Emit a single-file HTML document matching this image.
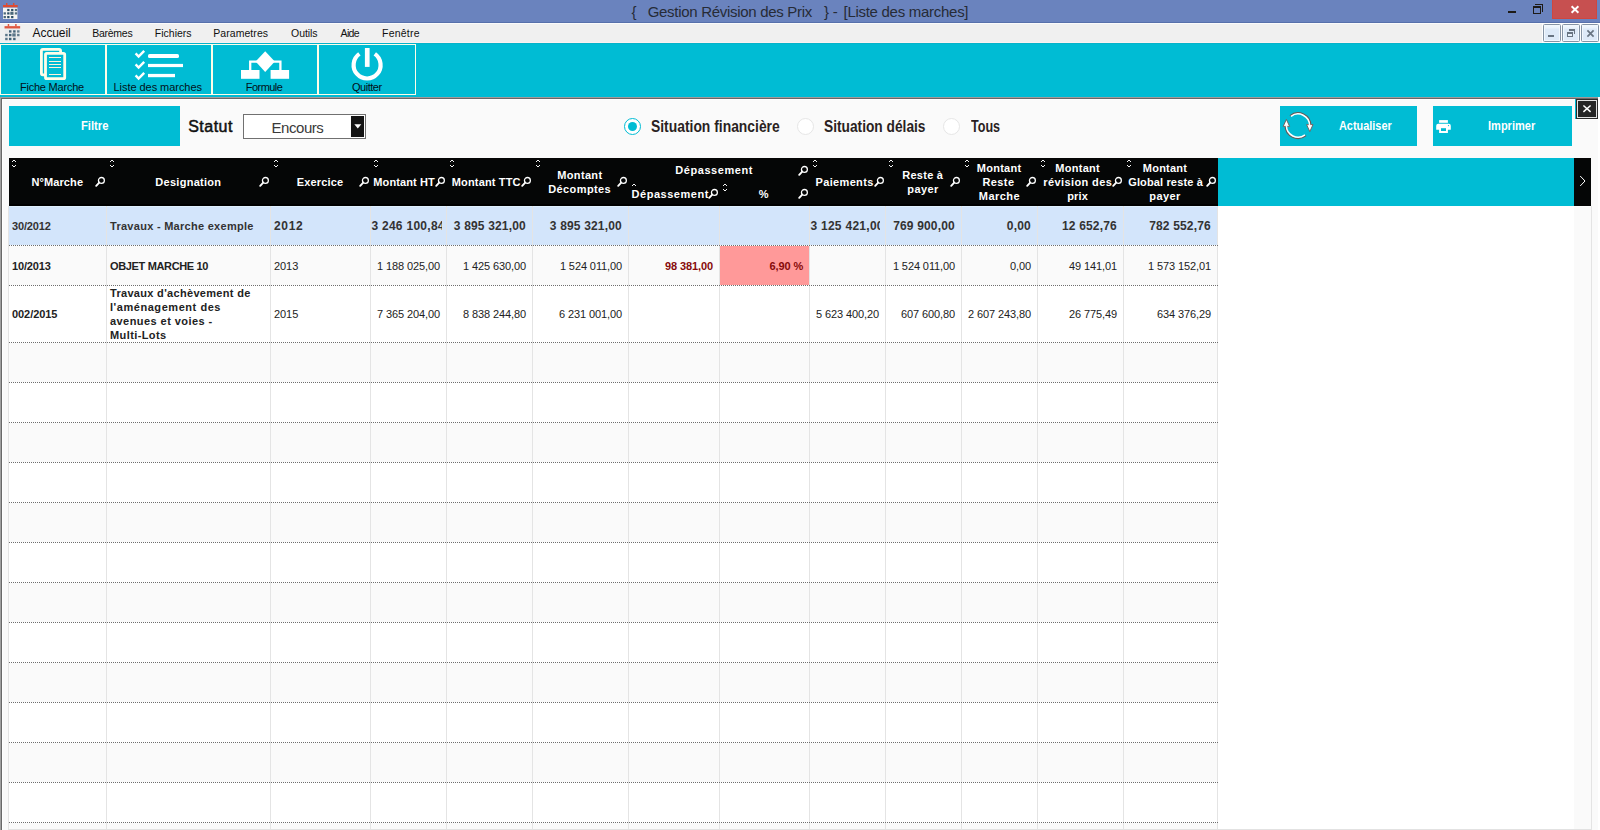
<!DOCTYPE html>
<html lang="fr">
<head>
<meta charset="utf-8">
<title>Gestion Révision des Prix - [Liste des marches]</title>
<style>
*{box-sizing:border-box;margin:0;padding:0}
html,body{width:1600px;height:830px;overflow:hidden;background:#fafafa;font-family:"Liberation Sans",sans-serif}
div,span,svg{position:absolute}
.t{white-space:pre;line-height:16px}
.cn{white-space:pre;line-height:20px;font-weight:bold;font-size:17px;color:#2a1f22;transform-origin:0 50%}
.dot{left:9px;width:1209px;height:1px;background:repeating-linear-gradient(90deg,#6e6e6e 0,#6e6e6e 1px,transparent 1px,transparent 2px)}
.vl{top:206px;width:1px;height:623px;background:#e4e4e4}
.mg{width:11px;height:11px;overflow:visible}
.so{width:4px;height:7px}
</style>
</head>
<body>
<div id="titlebar" style="left:0;top:0;width:1600px;height:22px;background:#6a83be"></div>
<div style="left:0;top:22px;width:1600px;height:1px;background:#5770ab"></div>
<div style="left:1508px;top:11px;width:8px;height:2px;background:#1d1b18"></div>
<div style="left:1535px;top:4px;width:8px;height:8px;border-top:1px solid #1d1b18;border-right:1px solid #1d1b18"></div>
<div style="left:1533px;top:6px;width:8px;height:8px;border:1px solid #1d1b18;border-top-width:2px;background:#6a83be"></div>
<div style="left:1552px;top:0;width:45px;height:19px;background:#c75050;border:1px solid #d0473f;border-top:none"></div>
<svg style="left:1570px;top:5px;width:10px;height:9px" viewBox="0 0 10 9"><path d="M1.6 1.2L8.4 7.8M8.4 1.2L1.6 7.8" stroke="#fff" stroke-width="1.9" fill="none"/></svg>

<div id="menubar" style="left:0;top:23px;width:1600px;height:19px;background:#f0f0f0"></div>
<div style="left:0;top:42px;width:1600px;height:1px;background:#fbf1f1"></div>
<div style="left:0;top:23px;width:1600px;height:1px;background:#fbfbfb"></div>
<div style="left:1542px;top:23px;width:58px;height:20px;background:#fff"></div>
<div style="left:1543px;top:24px;width:18px;height:18px;border:1px solid #8694a5;border-radius:1.5px;background:linear-gradient(#f3f8fe 0,#eaf3fc 3px,#deeaf8 4px,#deeaf8 100%);box-shadow:inset 0 0 0 1px #f2f8fe"></div>
<div style="left:1562px;top:24px;width:18px;height:18px;border:1px solid #8694a5;border-radius:1.5px;background:linear-gradient(#f3f8fe 0,#eaf3fc 3px,#deeaf8 4px,#deeaf8 100%);box-shadow:inset 0 0 0 1px #f2f8fe"></div>
<div style="left:1581px;top:24px;width:18px;height:18px;border:1px solid #8694a5;border-radius:1.5px;background:linear-gradient(#f3f8fe 0,#eaf3fc 3px,#deeaf8 4px,#deeaf8 100%);box-shadow:inset 0 0 0 1px #f2f8fe"></div>
<div style="left:1548px;top:35px;width:6px;height:2px;background:#687482"></div>
<div style="left:1569px;top:29px;width:6px;height:5px;border-top:2px solid #687482;border-right:1px solid #687482"></div>
<div style="left:1567px;top:32px;width:6px;height:5px;border:1px solid #687482;border-top-width:2px;background:#e6f0fa"></div>
<svg style="left:1586px;top:29px;width:9px;height:9px" viewBox="0 0 9 9"><path d="M1.4 1.4L7.6 7.6M7.6 1.4L1.4 7.6" stroke="#687482" stroke-width="1.7" fill="none"/></svg>

<svg style="left:3px;top:3px;width:15px;height:16px" viewBox="0 0 15 16">
<rect x="0" y="4.6" width="14.4" height="11.4" fill="#f4f4f2"/>
<rect x="0" y="2" width="14.7" height="2.2" fill="#dd4b32"/><rect x="3" y="0" width="1.4" height="2.2" fill="#dd4b32"/><rect x="10" y="0" width="1.4" height="2.2" fill="#dd4b32"/>
<g fill="#2b4d64"><rect x="4.2" y="5.9" width="2.3" height="2.2"/><rect x="8.1" y="5.9" width="2.3" height="2.2"/><rect x="11.8" y="5.9" width="2.3" height="2.2" opacity=".8"/>
<rect x="0.6" y="9.3" width="2.3" height="2.2" opacity=".85"/><rect x="4.2" y="9.3" width="2.3" height="2.2"/><rect x="7.3" y="8.8" width="3.2" height="3" opacity=".85"/><rect x="11.8" y="9.3" width="2.3" height="2.2" opacity=".8"/>
<rect x="0.6" y="13" width="2.3" height="2.2" opacity=".85"/><rect x="4.2" y="13" width="2.3" height="2.2"/><rect x="8.1" y="13" width="2.3" height="2.2"/></g>
</svg>
<svg style="left:4px;top:24px;width:17px;height:17px" viewBox="0 0 15 16" opacity=".92">
<rect x="0.3" y="4.6" width="14.2" height="11.2" fill="#e9ebec"/>
<rect x="0" y="2" width="14.7" height="2.2" fill="#dd4b32"/><rect x="3" y="0" width="1.4" height="2.2" fill="#dd4b32"/><rect x="10" y="0" width="1.4" height="2.2" fill="#dd4b32"/>
<g fill="#34566d"><rect x="4.2" y="5.9" width="2.3" height="2.2"/><rect x="8.1" y="5.9" width="2.3" height="2.2"/><rect x="11.8" y="5.9" width="2.3" height="2.2" opacity=".8"/>
<rect x="0.6" y="9.3" width="2.3" height="2.2" opacity=".85"/><rect x="4.2" y="9.3" width="2.3" height="2.2"/><rect x="7.3" y="8.8" width="3.2" height="3" opacity=".85"/><rect x="11.8" y="9.3" width="2.3" height="2.2" opacity=".8"/>
<rect x="0.6" y="13" width="2.3" height="2.2" opacity=".85"/><rect x="4.2" y="13" width="2.3" height="2.2"/><rect x="8.1" y="13" width="2.3" height="2.2"/></g>
</svg>

<div id="toolbar" style="left:0;top:43px;width:1600px;height:54px;background:#00bcd4"></div>
<div style="left:0;top:43px;width:1600px;height:1px;background:#05b3ca"></div>
<div style="left:0;top:44px;width:416px;height:1px;background:#fffde8"></div>
<div style="left:0;top:94px;width:416px;height:1px;background:#fffde8"></div>
<div style="left:0px;top:44px;width:1px;height:51px;background:#fffde8"></div>
<div style="left:105px;top:44px;width:2px;height:51px;background:#fffde8"></div>
<div style="left:211px;top:44px;width:2px;height:51px;background:#fffde8"></div>
<div style="left:317px;top:44px;width:2px;height:51px;background:#fffde8"></div>
<div style="left:415px;top:44px;width:1px;height:51px;background:#fffde8"></div>
<svg style="left:38px;top:46px;width:30px;height:36px" viewBox="38 46 30 36" fill="none">
<rect x="41.4" y="49.4" width="19.2" height="25.4" rx="1.5" stroke="#fffde8" stroke-width="2.8"/>
<rect x="45.5" y="53.3" width="19.2" height="25.4" rx="1.2" fill="#00bcd4" stroke="#fffde8" stroke-width="2.8"/>
<path d="M49 57.5H61M49 61.5H61M49 64.5H61M49 67.5H61M49 74.5H61" stroke="#fff1da" stroke-width="1"/>
</svg>
<svg style="left:132px;top:48px;width:54px;height:34px" viewBox="132 48 54 34" fill="none">
<g stroke="#fff" stroke-width="2.4" stroke-linejoin="miter"><path d="M135.6 53.4L138.6 56.6L144.2 50.8"/><path d="M135.6 64.4L138.6 67.6L144.2 61.8"/><path d="M135.6 75.4L138.6 78.6L144.2 72.8"/></g>
<rect x="148" y="54" width="31" height="4" rx="1.6" fill="#fff"/>
<rect x="148" y="63.9" width="35" height="3.2" fill="#fff"/>
<rect x="148" y="73.9" width="27" height="3.3" fill="#fff"/>
</svg>
<svg style="left:240px;top:50px;width:50px;height:30px" viewBox="240 50 50 30">
<path d="M265.2 51.2L274.8 61.6L265.2 72L255.6 61.6Z" fill="#fff"/>
<path d="M250.2 70V61.7H280.4V70" stroke="#fff" stroke-width="2.3" fill="none"/>
<rect x="241" y="70" width="18.5" height="8.8" fill="#fff"/><rect x="270.6" y="70" width="18.5" height="8.8" fill="#fff"/>
</svg>
<svg style="left:348px;top:46px;width:38px;height:36px" viewBox="348 46 38 36" fill="none">
<path d="M359.4 53.9A13.5 13.5 0 1 0 374.8 53.9" stroke="#fff" stroke-width="4.2"/>
<rect x="364.9" y="48" width="4.7" height="18.9" fill="#fff"/>
</svg>

<div style="left:0;top:97px;width:1598px;height:1px;background:#a39b9b"></div>
<div style="left:0;top:98px;width:1px;height:732px;background:#a0a0a0"></div>
<div style="left:1px;top:98px;width:1597px;height:1px;background:#696969"></div>
<div style="left:1px;top:98px;width:1px;height:732px;background:#696969"></div>
<div style="left:2px;top:99px;width:1596px;height:1px;background:#fff"></div>
<div style="left:2px;top:99px;width:1px;height:731px;background:#fff"></div>
<div style="left:1598px;top:97px;width:2px;height:733px;background:#fff"></div>
<div style="left:1575px;top:99px;width:1px;height:20px;background:#00bcd4"></div>
<div style="left:1576px;top:99px;width:22px;height:20px;background:#262626;border:1px solid #2b2b2b"></div>
<div style="left:1577px;top:100px;width:20px;height:18px;border:1px solid #e2e2e2"></div>
<svg style="left:1582px;top:104px;width:10px;height:9px" viewBox="0 0 10 9"><path d="M1.4 1.5L8.6 7.9M8.6 1.5L1.4 7.9" stroke="#fff" stroke-width="1.5" fill="none"/></svg>
<div style="left:1575px;top:119px;width:23px;height:1px;background:#fff"></div>
<div style="left:9px;top:106px;width:171px;height:40px;background:#00bcd4"></div>
<div style="left:243px;top:114px;width:123px;height:25px;background:#fff;border:1px solid #707070"></div>
<div style="left:351px;top:116px;width:13px;height:21px;background:#141414"></div>
<svg style="left:354px;top:124px;width:8px;height:5px" viewBox="0 0 8 5"><path d="M0.3 0.3H7.3L3.8 4.4Z" fill="#fff"/></svg>
<div style="left:624px;top:118px;width:17px;height:17px;border-radius:50%;background:#fff;border:1.6px solid #00bcd4"></div>
<div style="left:627.7px;top:121.7px;width:9.6px;height:9.6px;border-radius:50%;background:#00bcd4"></div>
<div style="left:797px;top:118px;width:17px;height:17px;border-radius:50%;background:#fff;border:1px solid #e6e6e6"></div>
<div style="left:943px;top:118px;width:17px;height:17px;border-radius:50%;background:#fff;border:1px solid #e6e6e6"></div>
<span class="cn" style="left:651px;top:117px;transform:scaleX(.816)">Situation financière</span>
<span class="cn" style="left:823.9px;top:117px;transform:scaleX(.808)">Situation délais</span>
<span class="cn" style="left:971.3px;top:117px;transform:scaleX(.74)">Tous</span>

<div style="left:1280px;top:106px;width:137px;height:40px;background:#00bcd4"></div>
<div style="left:1433px;top:106px;width:139px;height:40px;background:#00bcd4"></div>
<svg style="left:1280px;top:108px;width:36px;height:36px" viewBox="1280 108 36 36" fill="none">
<path d="M1290.01 115.73A12.7 12.7 0 0 1 1310.70 125.60" stroke="#6a5653" stroke-width="1.5"/><path d="M1305.99 135.47A12.7 12.7 0 0 1 1285.30 125.60" stroke="#6a5653" stroke-width="1.5"/>
<path d="M1306.6 124.6H1313L1309.8 131.6Z" fill="#fff" stroke="#6f5b58" stroke-width=".9"/>
<path d="M1283.2 126.4H1289.6L1286.4 119.4Z" fill="#fff" stroke="#6f5b58" stroke-width=".9"/>
<path d="M1291.02 116.34A11.6 11.6 0 0 1 1309.60 125.60" stroke="#fff" stroke-width="1.5"/><path d="M1304.98 134.86A11.6 11.6 0 0 1 1286.40 125.60" stroke="#fff" stroke-width="1.5"/>
</svg>
<svg style="left:1435px;top:119px;width:17px;height:15px" viewBox="1435 119 17 15">
<rect x="1439.1" y="120.1" width="8.8" height="2.7" fill="#fff"/>
<path d="M1438.2 123.8H1448.8A2 2 0 0 1 1450.8 125.8V129.8H1447.9V132.9H1439.1V129.8H1436.2V125.8A2 2 0 0 1 1438.2 123.8Z" fill="#fff"/>
<rect x="1441" y="128.2" width="5" height="2.8" fill="#00bcd4"/>
<circle cx="1448.5" cy="125.6" r=".65" fill="#00bcd4"/>
</svg>

<div style="left:9px;top:206px;width:1209px;height:623px;background:#fff"></div>
<div style="left:1218px;top:206px;width:356px;height:623px;background:#fff"></div>
<div style="left:1574px;top:206px;width:17px;height:1px;background:#fff"></div>
<div style="left:9px;top:206px;width:1209px;height:39px;background:#d3e5fb"></div>
<div style="left:9px;top:206px;width:1209px;height:1px;background:#e0f0fd"></div>
<div style="left:9px;top:246px;width:1209px;height:39px;background:#fafafa"></div>
<div style="left:9px;top:343px;width:1209px;height:39px;background:#fafafa"></div>
<div style="left:9px;top:423px;width:1209px;height:39px;background:#fafafa"></div>
<div style="left:9px;top:503px;width:1209px;height:39px;background:#fafafa"></div>
<div style="left:9px;top:583px;width:1209px;height:39px;background:#fafafa"></div>
<div style="left:9px;top:663px;width:1209px;height:39px;background:#fafafa"></div>
<div style="left:9px;top:743px;width:1209px;height:39px;background:#fafafa"></div>
<div style="left:9px;top:823px;width:1209px;height:6px;background:#fafafa"></div>
<div style="left:720px;top:246px;width:89px;height:39px;background:#ff9999"></div>
<div class="vl" style="left:106px"></div>
<div class="vl" style="left:270px"></div>
<div class="vl" style="left:370px"></div>
<div class="vl" style="left:446px"></div>
<div class="vl" style="left:532px"></div>
<div class="vl" style="left:628px"></div>
<div class="vl" style="left:719px"></div>
<div class="vl" style="left:809px"></div>
<div class="vl" style="left:885px"></div>
<div class="vl" style="left:961px"></div>
<div class="vl" style="left:1037px"></div>
<div class="vl" style="left:1123px"></div>
<div class="vl" style="left:1217px"></div>
<div class="dot" style="top:245px"></div>
<div class="dot" style="top:285px"></div>
<div class="dot" style="top:342px"></div>
<div class="dot" style="top:382px"></div>
<div class="dot" style="top:422px"></div>
<div class="dot" style="top:462px"></div>
<div class="dot" style="top:502px"></div>
<div class="dot" style="top:542px"></div>
<div class="dot" style="top:582px"></div>
<div class="dot" style="top:622px"></div>
<div class="dot" style="top:662px"></div>
<div class="dot" style="top:702px"></div>
<div class="dot" style="top:742px"></div>
<div class="dot" style="top:782px"></div>
<div class="dot" style="top:822px"></div>
<div style="left:8px;top:206px;width:1px;height:624px;background:#e4e4e4"></div>
<div style="left:8px;top:829px;width:1584px;height:1px;background:#e2e2e2"></div>
<div style="left:1591px;top:206px;width:1px;height:624px;background:#e4e4e4"></div>
<div id="thead" style="left:9px;top:158px;width:1209px;height:48px;background:#050606"></div>
<div style="left:9px;top:204px;width:1209px;height:2px;background:#000"></div>
<div style="left:1218px;top:158px;width:356px;height:48px;background:#00bcd4"></div>
<div style="left:1574px;top:158px;width:17px;height:48px;background:#050606"></div>
<svg style="left:1579px;top:175px;width:7px;height:12px" viewBox="0 0 7 12"><path d="M1.2 1L6 6L1.2 11" stroke="#fff" stroke-width="1" fill="none"/></svg>
<svg class="so" style="left:12px;top:160px" viewBox="0 0 4 7" shape-rendering="crispEdges" fill="#f4f4f4"><rect x="1" y="0" width="2" height="1"/><rect x="0" y="1" width="1" height="1"/><rect x="3" y="1" width="1" height="1"/><rect x="0" y="5" width="1" height="1"/><rect x="3" y="5" width="1" height="1"/><rect x="1" y="6" width="2" height="1"/></svg>
<svg class="so" style="left:110px;top:160px" viewBox="0 0 4 7" shape-rendering="crispEdges" fill="#f4f4f4"><rect x="1" y="0" width="2" height="1"/><rect x="0" y="1" width="1" height="1"/><rect x="3" y="1" width="1" height="1"/><rect x="0" y="5" width="1" height="1"/><rect x="3" y="5" width="1" height="1"/><rect x="1" y="6" width="2" height="1"/></svg>
<svg class="so" style="left:274px;top:160px" viewBox="0 0 4 7" shape-rendering="crispEdges" fill="#f4f4f4"><rect x="1" y="0" width="2" height="1"/><rect x="0" y="1" width="1" height="1"/><rect x="3" y="1" width="1" height="1"/><rect x="0" y="5" width="1" height="1"/><rect x="3" y="5" width="1" height="1"/><rect x="1" y="6" width="2" height="1"/></svg>
<svg class="so" style="left:374px;top:160px" viewBox="0 0 4 7" shape-rendering="crispEdges" fill="#f4f4f4"><rect x="1" y="0" width="2" height="1"/><rect x="0" y="1" width="1" height="1"/><rect x="3" y="1" width="1" height="1"/><rect x="0" y="5" width="1" height="1"/><rect x="3" y="5" width="1" height="1"/><rect x="1" y="6" width="2" height="1"/></svg>
<svg class="so" style="left:450px;top:160px" viewBox="0 0 4 7" shape-rendering="crispEdges" fill="#f4f4f4"><rect x="1" y="0" width="2" height="1"/><rect x="0" y="1" width="1" height="1"/><rect x="3" y="1" width="1" height="1"/><rect x="0" y="5" width="1" height="1"/><rect x="3" y="5" width="1" height="1"/><rect x="1" y="6" width="2" height="1"/></svg>
<svg class="so" style="left:536px;top:160px" viewBox="0 0 4 7" shape-rendering="crispEdges" fill="#f4f4f4"><rect x="1" y="0" width="2" height="1"/><rect x="0" y="1" width="1" height="1"/><rect x="3" y="1" width="1" height="1"/><rect x="0" y="5" width="1" height="1"/><rect x="3" y="5" width="1" height="1"/><rect x="1" y="6" width="2" height="1"/></svg>
<svg class="so" style="left:813px;top:160px" viewBox="0 0 4 7" shape-rendering="crispEdges" fill="#f4f4f4"><rect x="1" y="0" width="2" height="1"/><rect x="0" y="1" width="1" height="1"/><rect x="3" y="1" width="1" height="1"/><rect x="0" y="5" width="1" height="1"/><rect x="3" y="5" width="1" height="1"/><rect x="1" y="6" width="2" height="1"/></svg>
<svg class="so" style="left:889px;top:160px" viewBox="0 0 4 7" shape-rendering="crispEdges" fill="#f4f4f4"><rect x="1" y="0" width="2" height="1"/><rect x="0" y="1" width="1" height="1"/><rect x="3" y="1" width="1" height="1"/><rect x="0" y="5" width="1" height="1"/><rect x="3" y="5" width="1" height="1"/><rect x="1" y="6" width="2" height="1"/></svg>
<svg class="so" style="left:965px;top:160px" viewBox="0 0 4 7" shape-rendering="crispEdges" fill="#f4f4f4"><rect x="1" y="0" width="2" height="1"/><rect x="0" y="1" width="1" height="1"/><rect x="3" y="1" width="1" height="1"/><rect x="0" y="5" width="1" height="1"/><rect x="3" y="5" width="1" height="1"/><rect x="1" y="6" width="2" height="1"/></svg>
<svg class="so" style="left:1041px;top:160px" viewBox="0 0 4 7" shape-rendering="crispEdges" fill="#f4f4f4"><rect x="1" y="0" width="2" height="1"/><rect x="0" y="1" width="1" height="1"/><rect x="3" y="1" width="1" height="1"/><rect x="0" y="5" width="1" height="1"/><rect x="3" y="5" width="1" height="1"/><rect x="1" y="6" width="2" height="1"/></svg>
<svg class="so" style="left:1127px;top:160px" viewBox="0 0 4 7" shape-rendering="crispEdges" fill="#f4f4f4"><rect x="1" y="0" width="2" height="1"/><rect x="0" y="1" width="1" height="1"/><rect x="3" y="1" width="1" height="1"/><rect x="0" y="5" width="1" height="1"/><rect x="3" y="5" width="1" height="1"/><rect x="1" y="6" width="2" height="1"/></svg>
<svg class="so" style="left:632px;top:184px" viewBox="0 0 4 7" shape-rendering="crispEdges" fill="#f4f4f4"><rect x="1" y="0" width="2" height="1"/><rect x="0" y="1" width="1" height="1"/><rect x="3" y="1" width="1" height="1"/></svg>
<svg class="so" style="left:723px;top:184px" viewBox="0 0 4 7" shape-rendering="crispEdges" fill="#f4f4f4"><rect x="1" y="0" width="2" height="1"/><rect x="0" y="1" width="1" height="1"/><rect x="3" y="1" width="1" height="1"/><rect x="0" y="5" width="1" height="1"/><rect x="3" y="5" width="1" height="1"/><rect x="1" y="6" width="2" height="1"/></svg>
<svg class="mg" style="left:94.6px;top:176.4px" viewBox="0 0 11 11"><circle cx="6.4" cy="4.45" r="2.95" fill="none" stroke="#fff" stroke-width="1.3"/><path d="M4.2 6.6L1.2 9.8" stroke="#fff" stroke-width="1.9" stroke-linecap="round"/></svg>
<svg class="mg" style="left:258.6px;top:176.4px" viewBox="0 0 11 11"><circle cx="6.4" cy="4.45" r="2.95" fill="none" stroke="#fff" stroke-width="1.3"/><path d="M4.2 6.6L1.2 9.8" stroke="#fff" stroke-width="1.9" stroke-linecap="round"/></svg>
<svg class="mg" style="left:358.6px;top:176.4px" viewBox="0 0 11 11"><circle cx="6.4" cy="4.45" r="2.95" fill="none" stroke="#fff" stroke-width="1.3"/><path d="M4.2 6.6L1.2 9.8" stroke="#fff" stroke-width="1.9" stroke-linecap="round"/></svg>
<svg class="mg" style="left:434.6px;top:176.4px" viewBox="0 0 11 11"><circle cx="6.4" cy="4.45" r="2.95" fill="none" stroke="#fff" stroke-width="1.3"/><path d="M4.2 6.6L1.2 9.8" stroke="#fff" stroke-width="1.9" stroke-linecap="round"/></svg>
<svg class="mg" style="left:520.6px;top:176.4px" viewBox="0 0 11 11"><circle cx="6.4" cy="4.45" r="2.95" fill="none" stroke="#fff" stroke-width="1.3"/><path d="M4.2 6.6L1.2 9.8" stroke="#fff" stroke-width="1.9" stroke-linecap="round"/></svg>
<svg class="mg" style="left:616.6px;top:176.4px" viewBox="0 0 11 11"><circle cx="6.4" cy="4.45" r="2.95" fill="none" stroke="#fff" stroke-width="1.3"/><path d="M4.2 6.6L1.2 9.8" stroke="#fff" stroke-width="1.9" stroke-linecap="round"/></svg>
<svg class="mg" style="left:873.6px;top:176.4px" viewBox="0 0 11 11"><circle cx="6.4" cy="4.45" r="2.95" fill="none" stroke="#fff" stroke-width="1.3"/><path d="M4.2 6.6L1.2 9.8" stroke="#fff" stroke-width="1.9" stroke-linecap="round"/></svg>
<svg class="mg" style="left:949.6px;top:176.4px" viewBox="0 0 11 11"><circle cx="6.4" cy="4.45" r="2.95" fill="none" stroke="#fff" stroke-width="1.3"/><path d="M4.2 6.6L1.2 9.8" stroke="#fff" stroke-width="1.9" stroke-linecap="round"/></svg>
<svg class="mg" style="left:1025.6px;top:176.4px" viewBox="0 0 11 11"><circle cx="6.4" cy="4.45" r="2.95" fill="none" stroke="#fff" stroke-width="1.3"/><path d="M4.2 6.6L1.2 9.8" stroke="#fff" stroke-width="1.9" stroke-linecap="round"/></svg>
<svg class="mg" style="left:1111.6px;top:176.4px" viewBox="0 0 11 11"><circle cx="6.4" cy="4.45" r="2.95" fill="none" stroke="#fff" stroke-width="1.3"/><path d="M4.2 6.6L1.2 9.8" stroke="#fff" stroke-width="1.9" stroke-linecap="round"/></svg>
<svg class="mg" style="left:1205.6px;top:176.4px" viewBox="0 0 11 11"><circle cx="6.4" cy="4.45" r="2.95" fill="none" stroke="#fff" stroke-width="1.3"/><path d="M4.2 6.6L1.2 9.8" stroke="#fff" stroke-width="1.9" stroke-linecap="round"/></svg>
<svg class="mg" style="left:797.6px;top:164.6px" viewBox="0 0 11 11"><circle cx="6.4" cy="4.45" r="2.95" fill="none" stroke="#fff" stroke-width="1.3"/><path d="M4.2 6.6L1.2 9.8" stroke="#fff" stroke-width="1.9" stroke-linecap="round"/></svg>
<svg class="mg" style="left:707.6px;top:188.4px" viewBox="0 0 11 11"><circle cx="6.4" cy="4.45" r="2.95" fill="none" stroke="#fff" stroke-width="1.3"/><path d="M4.2 6.6L1.2 9.8" stroke="#fff" stroke-width="1.9" stroke-linecap="round"/></svg>
<svg class="mg" style="left:797.6px;top:188.4px" viewBox="0 0 11 11"><circle cx="6.4" cy="4.45" r="2.95" fill="none" stroke="#fff" stroke-width="1.3"/><path d="M4.2 6.6L1.2 9.8" stroke="#fff" stroke-width="1.9" stroke-linecap="round"/></svg>
<span class="t" style="left:631.50px;top:4px;font-size:15px;color:#262b36;">{</span>
<span class="t" style="left:647.70px;top:4px;font-size:15px;color:#262b36;letter-spacing:-0.30px;">Gestion Révision des Prix</span>
<span class="t" style="left:824.00px;top:4px;font-size:15px;color:#262b36;">}</span>
<span class="t" style="left:832.70px;top:4px;font-size:15px;color:#262b36;">-</span>
<span class="t" style="left:843.50px;top:4px;font-size:15px;color:#262b36;letter-spacing:-0.28px;">[Liste des marches]</span>
<span class="t" style="left:32.60px;top:25px;font-size:12px;color:#101010;letter-spacing:-0.10px;">Accueil</span>
<span class="t" style="left:92.30px;top:25px;font-size:10.5px;color:#101010;letter-spacing:-0.28px;">Barèmes</span>
<span class="t" style="left:154.80px;top:25px;font-size:10.5px;color:#101010;">Fichiers</span>
<span class="t" style="left:213.20px;top:25px;font-size:10.5px;color:#101010;letter-spacing:0.07px;">Parametres</span>
<span class="t" style="left:291.10px;top:25px;font-size:10.5px;color:#101010;letter-spacing:-0.10px;">Outils</span>
<span class="t" style="left:340.60px;top:25px;font-size:10.5px;color:#101010;letter-spacing:-0.70px;">Aide</span>
<span class="t" style="left:382.00px;top:25px;font-size:10.5px;color:#101010;letter-spacing:0.23px;">Fenêtre</span>
<span class="t" style="left:19.90px;top:79px;font-size:11px;color:#021018;letter-spacing:-0.21px;">Fiche Marche</span>
<span class="t" style="left:113.50px;top:79px;font-size:11px;color:#021018;letter-spacing:-0.05px;">Liste des marches</span>
<span class="t" style="left:245.70px;top:79px;font-size:11px;color:#021018;letter-spacing:-0.52px;">Formule</span>
<span class="t" style="left:352.00px;top:79px;font-size:11px;color:#021018;letter-spacing:-0.48px;">Quitter</span>
<span class="t" style="left:80.70px;top:118px;font-size:12.5px;color:#ffffff;font-weight:bold;transform:scaleX(0.897);transform-origin:0 50%;">Filtre</span>
<span class="t" style="left:188.20px;top:119px;font-size:16px;color:#111111;-webkit-text-stroke:0.5px #111111;letter-spacing:0.48px;">Statut</span>
<span class="t" style="left:271.50px;top:120px;font-size:15px;color:#3a3a3a;letter-spacing:-0.45px;">Encours</span>
<span class="t" style="left:1339.00px;top:118px;font-size:12.5px;color:#ffffff;font-weight:bold;transform:scaleX(0.872);transform-origin:0 50%;">Actualiser</span>
<span class="t" style="left:1488.42px;top:118px;font-size:12.5px;color:#ffffff;font-weight:bold;transform:scaleX(0.883);transform-origin:0 50%;">Imprimer</span>
<span class="t" style="left:31.40px;top:174px;font-size:11px;color:#ffffff;font-weight:bold;letter-spacing:0.11px;">N°Marche</span>
<span class="t" style="left:155.30px;top:174px;font-size:11px;color:#ffffff;font-weight:bold;letter-spacing:0.28px;">Designation</span>
<span class="t" style="left:296.80px;top:174px;font-size:11px;color:#ffffff;font-weight:bold;letter-spacing:0.14px;">Exercice</span>
<span class="t" style="left:373.30px;top:174px;font-size:11px;color:#ffffff;font-weight:bold;letter-spacing:0.11px;">Montant HT</span>
<span class="t" style="left:451.80px;top:174px;font-size:11px;color:#ffffff;font-weight:bold;letter-spacing:0.15px;">Montant TTC</span>
<span class="t" style="left:557.30px;top:167px;font-size:11px;color:#ffffff;font-weight:bold;letter-spacing:0.33px;">Montant</span>
<span class="t" style="left:548.30px;top:181px;font-size:11px;color:#ffffff;font-weight:bold;letter-spacing:0.38px;">Décomptes</span>
<span class="t" style="left:675.30px;top:162px;font-size:11px;color:#ffffff;font-weight:bold;letter-spacing:0.55px;">Dépassement</span>
<span class="t" style="left:631.55px;top:186px;font-size:11px;color:#ffffff;font-weight:bold;letter-spacing:0.53px;">Dépassement</span>
<span class="t" style="left:758.80px;top:186px;font-size:11px;color:#ffffff;font-weight:bold;">%</span>
<span class="t" style="left:815.55px;top:174px;font-size:11px;color:#ffffff;font-weight:bold;letter-spacing:0.34px;">Paiements</span>
<span class="t" style="left:902.30px;top:167px;font-size:11px;color:#ffffff;font-weight:bold;letter-spacing:0.25px;">Reste à</span>
<span class="t" style="left:907.30px;top:181px;font-size:11px;color:#ffffff;font-weight:bold;letter-spacing:0.38px;">payer</span>
<span class="t" style="left:976.80px;top:160px;font-size:11px;color:#ffffff;font-weight:bold;letter-spacing:0.25px;">Montant</span>
<span class="t" style="left:982.55px;top:174px;font-size:11px;color:#ffffff;font-weight:bold;letter-spacing:0.38px;">Reste</span>
<span class="t" style="left:978.80px;top:188px;font-size:11px;color:#ffffff;font-weight:bold;letter-spacing:0.45px;">Marche</span>
<span class="t" style="left:1055.30px;top:160px;font-size:11px;color:#ffffff;font-weight:bold;letter-spacing:0.27px;">Montant</span>
<span class="t" style="left:1043.30px;top:174px;font-size:11px;color:#ffffff;font-weight:bold;letter-spacing:0.39px;">révision des</span>
<span class="t" style="left:1067.20px;top:188px;font-size:11px;color:#ffffff;font-weight:bold;letter-spacing:0.20px;">prix</span>
<span class="t" style="left:1142.80px;top:160px;font-size:11px;color:#ffffff;font-weight:bold;letter-spacing:0.23px;">Montant</span>
<span class="t" style="left:1128.20px;top:174px;font-size:11px;color:#ffffff;font-weight:bold;letter-spacing:0.14px;">Global reste à</span>
<span class="t" style="left:1149.30px;top:188px;font-size:11px;color:#ffffff;font-weight:bold;letter-spacing:0.40px;">payer</span>
<span class="t" style="left:12.00px;top:218px;font-size:11px;color:#333333;font-weight:bold;letter-spacing:-0.15px;">30/2012</span>
<span class="t" style="left:110.00px;top:218px;font-size:11px;color:#333333;font-weight:bold;letter-spacing:0.28px;">Travaux - Marche exemple</span>
<span class="t" style="left:274.00px;top:218px;font-size:12px;color:#333333;font-weight:bold;letter-spacing:0.67px;">2012</span>
<div style="left:371px;top:210px;width:70.5px;height:30px;overflow:hidden"><span class="t" style="left:0.40px;top:8px;font-size:12px;color:#333333;font-weight:bold;letter-spacing:0.28px;">3 246 100,84</span></div>
<span class="t" style="right:1074.16px;top:218px;font-size:12px;color:#333333;font-weight:bold;letter-spacing:0.16px;">3 895 321,00</span>
<span class="t" style="right:978.16px;top:218px;font-size:12px;color:#333333;font-weight:bold;letter-spacing:0.16px;">3 895 321,00</span>
<div style="left:810px;top:210px;width:69.5px;height:30px;overflow:hidden"><span class="t" style="left:0.40px;top:8px;font-size:12px;color:#333333;font-weight:bold;letter-spacing:0.28px;">3 125 421,00</span></div>
<span class="t" style="right:645.16px;top:218px;font-size:12px;color:#333333;font-weight:bold;letter-spacing:0.16px;">769 900,00</span>
<span class="t" style="right:569.16px;top:218px;font-size:12px;color:#333333;font-weight:bold;letter-spacing:0.16px;">0,00</span>
<span class="t" style="right:483.16px;top:218px;font-size:12px;color:#333333;font-weight:bold;letter-spacing:0.16px;">12 652,76</span>
<span class="t" style="right:389.16px;top:218px;font-size:12px;color:#333333;font-weight:bold;letter-spacing:0.16px;">782 552,76</span>
<span class="t" style="left:12.00px;top:258px;font-size:11px;color:#222222;font-weight:bold;letter-spacing:-0.15px;">10/2013</span>
<span class="t" style="left:110.00px;top:258px;font-size:11px;color:#222222;font-weight:bold;letter-spacing:-0.35px;">OBJET MARCHE 10</span>
<span class="t" style="left:274.00px;top:258px;font-size:11px;color:#222222;letter-spacing:-0.07px;">2013</span>
<span class="t" style="right:1159.90px;top:258px;font-size:11px;color:#222222;letter-spacing:-0.10px;">1 188 025,00</span>
<span class="t" style="right:1073.90px;top:258px;font-size:11px;color:#222222;letter-spacing:-0.10px;">1 425 630,00</span>
<span class="t" style="right:977.90px;top:258px;font-size:11px;color:#222222;letter-spacing:-0.10px;">1 524 011,00</span>
<span class="t" style="right:886.90px;top:258px;font-size:11px;color:#870a0a;font-weight:bold;letter-spacing:-0.10px;">98 381,00</span>
<span class="t" style="right:796.90px;top:258px;font-size:11px;color:#870a0a;font-weight:bold;letter-spacing:-0.10px;">6,90 %</span>
<span class="t" style="right:644.90px;top:258px;font-size:11px;color:#222222;letter-spacing:-0.10px;">1 524 011,00</span>
<span class="t" style="right:568.90px;top:258px;font-size:11px;color:#222222;letter-spacing:-0.10px;">0,00</span>
<span class="t" style="right:482.90px;top:258px;font-size:11px;color:#222222;letter-spacing:-0.10px;">49 141,01</span>
<span class="t" style="right:388.90px;top:258px;font-size:11px;color:#222222;letter-spacing:-0.10px;">1 573 152,01</span>
<span class="t" style="left:12.00px;top:306px;font-size:11px;color:#222222;font-weight:bold;letter-spacing:-0.07px;">002/2015</span>
<span class="t" style="left:110.00px;top:285px;font-size:11px;color:#222222;font-weight:bold;letter-spacing:0.31px;">Travaux d'achèvement de</span>
<span class="t" style="left:110.00px;top:299px;font-size:11px;color:#222222;font-weight:bold;letter-spacing:0.55px;">l'aménagement des</span>
<span class="t" style="left:110.00px;top:313px;font-size:11px;color:#222222;font-weight:bold;letter-spacing:0.44px;">avenues et voies -</span>
<span class="t" style="left:110.00px;top:327px;font-size:11px;color:#222222;font-weight:bold;letter-spacing:0.40px;">Multi-Lots</span>
<span class="t" style="left:274.00px;top:306px;font-size:11px;color:#222222;letter-spacing:-0.07px;">2015</span>
<span class="t" style="right:1159.90px;top:306px;font-size:11px;color:#222222;letter-spacing:-0.10px;">7 365 204,00</span>
<span class="t" style="right:1073.90px;top:306px;font-size:11px;color:#222222;letter-spacing:-0.10px;">8 838 244,80</span>
<span class="t" style="right:977.90px;top:306px;font-size:11px;color:#222222;letter-spacing:-0.10px;">6 231 001,00</span>
<span class="t" style="right:720.90px;top:306px;font-size:11px;color:#222222;letter-spacing:-0.10px;">5 623 400,20</span>
<span class="t" style="right:644.90px;top:306px;font-size:11px;color:#222222;letter-spacing:-0.10px;">607 600,80</span>
<span class="t" style="right:568.90px;top:306px;font-size:11px;color:#222222;letter-spacing:-0.10px;">2 607 243,80</span>
<span class="t" style="right:482.90px;top:306px;font-size:11px;color:#222222;letter-spacing:-0.10px;">26 775,49</span>
<span class="t" style="right:388.90px;top:306px;font-size:11px;color:#222222;letter-spacing:-0.10px;">634 376,29</span>
</body>
</html>
